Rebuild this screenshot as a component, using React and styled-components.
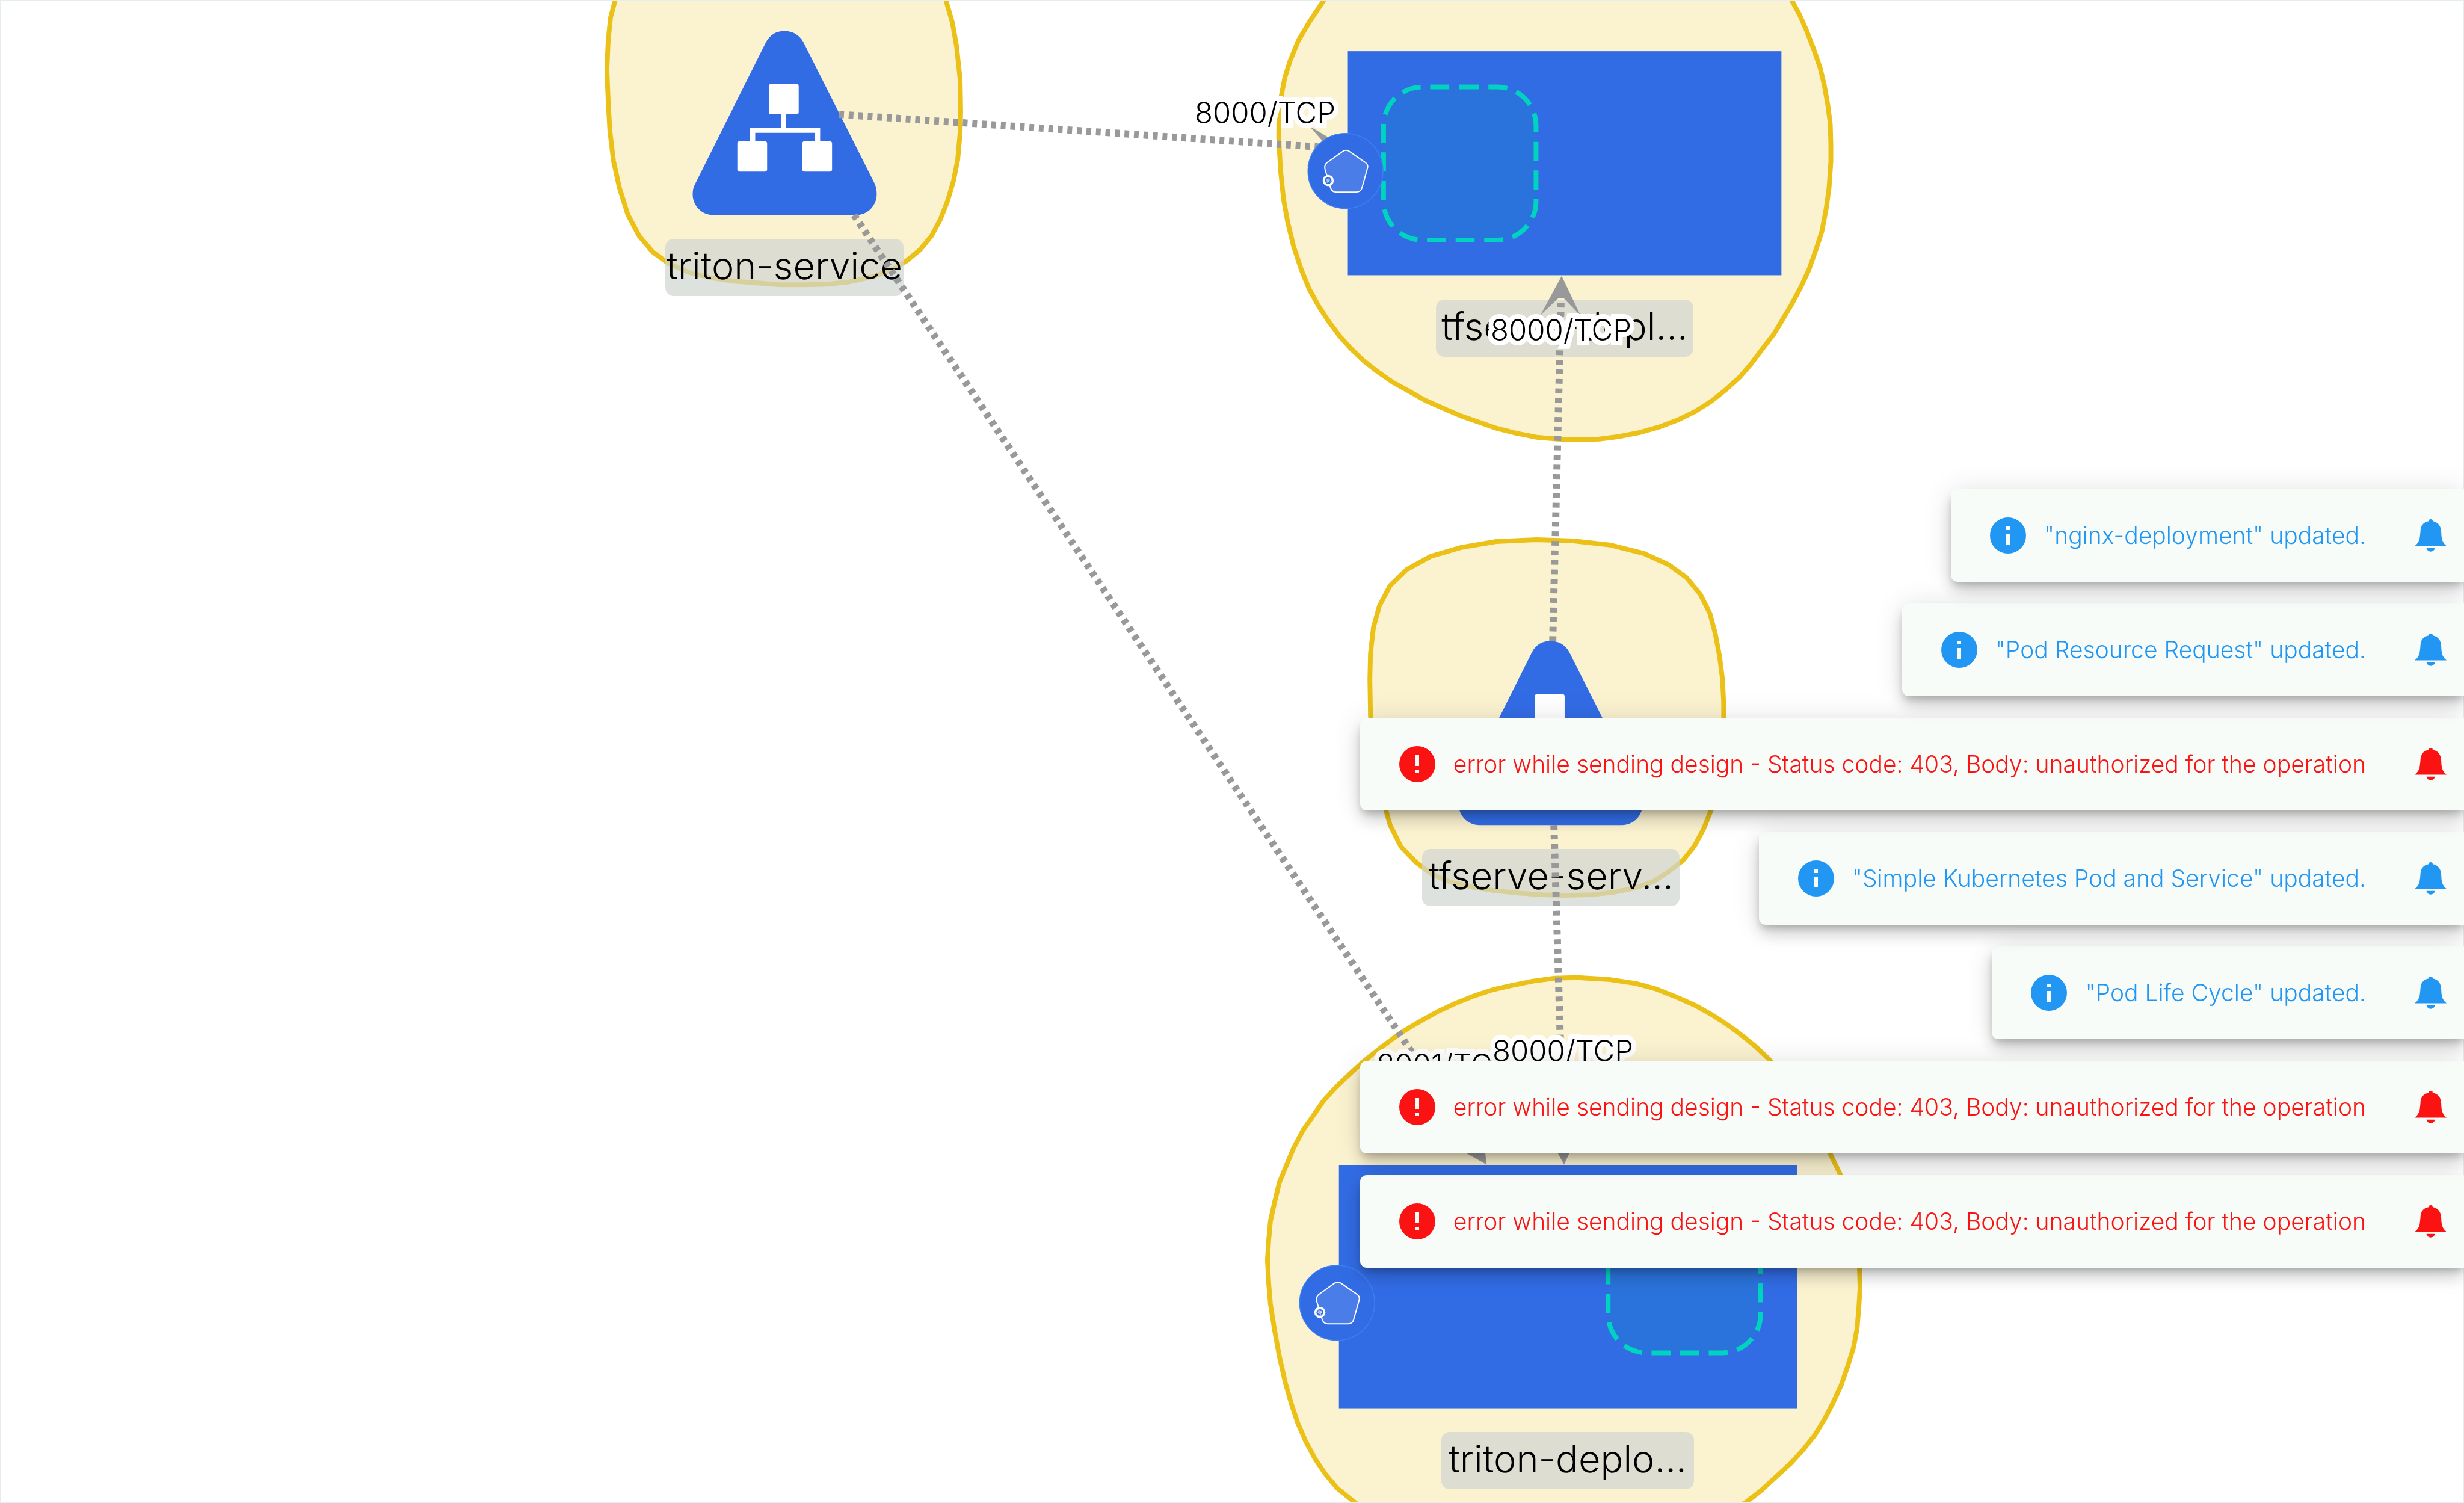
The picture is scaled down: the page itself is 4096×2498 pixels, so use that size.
import React from "react";
import styled, { createGlobalStyle } from "styled-components";

const WORLD = { w: 4137, h: 2523 };
const pct = (value, total) => `${(value / total) * 100}%`;

const GlobalStyle = createGlobalStyle`
  body {
    margin: 0;
    background: #ffffff;
    font-family: Inter, "Open Sans", sans-serif;
  }
`;

const Page = styled.main`
  position: relative;
  width: 100%;
  min-height: 100vh;
  overflow: hidden;
`;

const Canvas = styled.section`
  position: relative;
  width: 100%;
  aspect-ratio: ${WORLD.w} / ${WORLD.h};
  overflow: hidden;

  &::after {
    content: "";
    position: absolute;
    inset: 0;
    border: 1px solid #e6edf1;
    pointer-events: none;
  }
`;

const Layer = styled.svg`
  position: absolute;
  inset: 0;
  width: 100%;
  height: 100%;
`;

const NodeLabel = styled.span`
  position: absolute;
  left: ${(p) => pct(p.$x, WORLD.w)};
  top: ${(p) => pct(p.$y, WORLD.h)};
  transform: translateX(-50%);
  box-sizing: border-box;
  width: ${(p) => p.$w}px;
  height: 95px;
  padding-bottom: 7px;
  display: flex;
  align-items: center;
  justify-content: center;
  border-radius: 14px;
  background: rgba(208, 213, 209, 0.7);
  color: #000000;
  font-size: 63px;
  font-weight: 300;
  line-height: 88px;
  white-space: nowrap;
`;

const EdgeLabel = styled.span`
  position: absolute;
  left: ${(p) => pct(p.$x, WORLD.w)};
  top: ${(p) => pct(p.$y, WORLD.h)};
  transform: translate(-50%, -50%);
  color: #000000;
  font-size: 49px;
  font-weight: 300;
  line-height: 60px;
  white-space: nowrap;
  -webkit-text-stroke: 16px #ffffff;
  paint-order: stroke fill;
  stroke-linejoin: round;
`;

const ToastStack = styled.ul`
  position: fixed;
  right: 0;
  bottom: 391px;
  margin: 0;
  padding: 0;
  list-style: none;
  display: flex;
  flex-direction: column-reverse;
  align-items: flex-end;
  gap: 36px;
`;

const Toast = styled.li`
  position: relative;
  box-sizing: border-box;
  height: 154px;
  padding: 0 29px 0 65px;
  display: flex;
  align-items: center;
  border-radius: 11px 0 0 11px;
  background: #f7fcf8;
  color: ${(p) => (p.$kind === "error" ? "#fb1313" : "#2196f3")};
  box-shadow:
    0 8px 13px -3px rgba(0, 0, 0, 0.2),
    0 16px 27px rgba(0, 0, 0, 0.14),
    0 3px 48px rgba(0, 0, 0, 0.12);
`;

const StatusIcon = styled.svg`
  width: 60px;
  height: 60px;
  margin-right: 30px;
  flex: none;
`;

const Message = styled.span`
  font-size: 39px;
  font-weight: 300;
  line-height: 56px;
  white-space: nowrap;
`;

const BellButton = styled.button`
  margin: 0 0 0 81px;
  padding: 0;
  border: 0;
  background: none;
  color: inherit;
  display: flex;
  cursor: pointer;
`;

const Bell = styled.svg`
  width: 53px;
  height: 54px;
`;

const hulls = [
  "1036,-20 1033,0 1025,30 1021,70 1019,117 1021,167 1024,220 1030,270 1040,315 1054,360 1073,396 1096,423 1122,442 1156,457 1192,466 1232,472 1310,478 1350,478 1391,477 1426,473 1467,464 1498,452 1522,438 1545,419 1564,396 1579,368 1591,337 1601,303 1608,268 1612,223 1613,187 1612,133 1606,77 1599,38 1588,0 1582,-20",
  "2240,-20 2223,0 2199,36 2180,68 2166,102 2157,131 2151,162 2147,199 2147,233 2150,286 2155,334 2162,373 2172,414 2185,453 2198,485 2214,514 2229,537 2250,565 2268,585 2290,606 2313,624 2339,642 2368,658 2393,672 2429,688 2455,699 2484,709 2513,719 2545,727 2580,734 2616,737 2649,738 2685,737 2717,733 2753,726 2785,717 2817,705 2846,691 2874,673 2899,653 2921,633 2940,611 2958,587 2978,561 2992,538 3008,511 3024,481 3037,453 3049,419 3059,388 3066,351 3071,315 3074,271 3074,242 3073,208 3069,177 3063,143 3056,114 3045,82 3033,51 3021,24 3008,0 2996,-20",
  "2579,906 2642,908 2704,915 2760,929 2802,948 2832,970 2855,998 2871,1030 2880,1064 2887,1101 2892,1140 2894,1179 2894,1205 2892,1260 2886,1310 2875,1355 2860,1392 2845,1420 2826,1444 2802,1463 2776,1480 2744,1491 2709,1498 2671,1502 2628,1503 2590,1502 2546,1499 2508,1495 2472,1489 2436,1481 2405,1468 2377,1447 2352,1421 2334,1385 2326,1357 2312,1305 2305,1255 2301,1201 2300,1140 2301,1097 2306,1053 2316,1017 2334,983 2362,956 2402,934 2453,919 2512,909",
  "2648,1641 2610,1642 2574,1647 2539,1654 2508,1661 2477,1671 2444,1684 2414,1698 2380,1717 2350,1735 2319,1758 2289,1782 2266,1803 2243,1825 2222,1848 2204,1874 2188,1897 2172,1927 2160,1956 2148,1985 2140,2018 2133,2050 2130,2083 2128,2115 2130,2153 2133,2189 2140,2233 2148,2277 2158,2321 2168,2356 2179,2389 2192,2419 2208,2449 2225,2474 2245,2498 2276,2523 2306,2545 2880,2545 2930,2523 2957,2502 2983,2478 3007,2456 3028,2433 3047,2409 3063,2383 3077,2356 3091,2326 3102,2294 3112,2262 3118,2230 3121,2194 3123,2162 3122,2128 3117,2075 3106,2020 3090,1972 3073,1937 3045,1878 3010,1822 2970,1778 2948,1757 2927,1740 2903,1722 2877,1705 2847,1688 2813,1673 2780,1660 2747,1651 2700,1644",
];

const edges = [
  { from: [1409, 192], to: [2263, 250] },
  { from: [1434, 361], to: [2496, 1955] },
  { from: [2607, 1076], to: [2622, 463] },
  { from: [2609, 1385], to: [2626, 1955] },
];

const nodeLabels = [
  { text: "triton-service", x: 1317, y: 401, w: 396 },
  { text: "tfserve-depl...", x: 2627, y: 503, w: 428 },
  { text: "tfserve-serv...", x: 2604, y: 1425, w: 428 },
  { text: "triton-deplo...", x: 2632, y: 2404, w: 420 },
];

const edgeLabels = [
  { text: "8000/TCP", x: 2124, y: 190 },
  { text: "8000/TCP", x: 2621, y: 554 },
  { text: "8001/TCP", x: 2424, y: 1788 },
  { text: "8000/TCP", x: 2624, y: 1765 },
];

const forbidden =
  "error while sending design - Status code: 403, Body: unauthorized for the operation";

const toasts = [
  { kind: "info", text: '"nginx-deployment" updated.' },
  { kind: "info", text: '"Pod Resource Request" updated.' },
  { kind: "error", text: forbidden },
  { kind: "info", text: '"Simple Kubernetes Pod and Service" updated.' },
  { kind: "info", text: '"Pod Life Cycle" updated.' },
  { kind: "error", text: forbidden },
  { kind: "error", text: forbidden },
];

function ServiceNode({ x, y }) {
  return (
    <g transform={`translate(${x} ${y})`}>
      <path
        fill="#326ce5"
        d="M123 19C130 6 141 0 154 0S179 6 186 19L306 257C308 262 309 268 309 274C309 293 294 309 274 309H35C15 309 0 293 0 274C0 268 1 262 4 257Z"
      />
      <g fill="#ffffff">
        <rect x="128" y="89" width="50" height="51" rx="4" />
        <rect x="75" y="185" width="50" height="51" rx="4" />
        <rect x="184" y="185" width="50" height="51" rx="4" />
        <path d="M148 138h9v24h57v25h-9v-16h-100v16h-9v-25h52z" />
      </g>
    </g>
  );
}

function PodArea({ x, y }) {
  return (
    <path
      transform={`translate(${x} ${y})`}
      d="M128 0H191A65 65 0 0 1 256 65V192A65 65 0 0 1 191 257H65A65 65 0 0 1 0 192V65A65 65 0 0 1 65 0Z"
      fill="#2b73dc"
      stroke="#00d3bf"
      strokeWidth="8"
      strokeDasharray="32 16"
    />
  );
}

function DeploymentBadge({ x, y }) {
  const spokes = [0, 1, 2, 3, 4, 5, 6].map((i) => (i * 360) / 7);
  return (
    <g transform={`translate(${x} ${y})`}>
      <circle r="63" fill="#326ce5" stroke="#3b80f7" strokeWidth="1.5" />
      <g transform="scale(0.3333) translate(-208 -212)">
        <path
          d="M195 113Q211 103 227 113L308 169Q324 180 319 198L291 298Q284 318 264 318H160Q143 318 134 300L105 204Q100 183 115 170Z"
          fill="#ffffff"
          fillOpacity="0.12"
          stroke="#ffffff"
          strokeWidth="6"
          strokeLinejoin="round"
        />
        <circle cx="121" cy="260" r="28" fill="#ffffff" />
        <g transform="translate(121 260)">
          <path d="M0-18L14-11L18 4L8 16H-8L-18 4L-14-11Z" fill="#326ce5" />
          <circle r="7" fill="none" stroke="#ffffff" strokeWidth="2" />
          {spokes.map((a) => (
            <path key={a} d="M0-2V-13" transform={`rotate(${a})`} stroke="#ffffff" strokeWidth="2" />
          ))}
        </g>
      </g>
    </g>
  );
}

function Edge({ from, to }) {
  const dx = to[0] - from[0];
  const dy = to[1] - from[1];
  const len = Math.hypot(dx, dy);
  const angle = (Math.atan2(dy, dx) * 180) / Math.PI;
  return (
    <g transform={`translate(${from[0]} ${from[1]}) rotate(${angle})`}>
      <path d={`M0 0H${len - 37}`} stroke="#999999" strokeWidth="12" strokeDasharray="8 8" />
      <path d={`M${len} 0L${len - 67} -34L${len - 37} -4V4L${len - 67} 34Z`} fill="#999999" />
    </g>
  );
}

function Notice({ kind, text }) {
  return (
    <Toast $kind={kind} role="status">
      <StatusIcon viewBox="0 0 20 20" aria-hidden="true">
        <circle cx="10" cy="10" r="10" fill="currentColor" />
        <path
          fill="#f7fcf8"
          d={kind === "error" ? "M9 5h2v6H9zM9 13h2v2H9z" : "M9 5h2v2H9zM9 9h2v6H9z"}
        />
      </StatusIcon>
      <Message>{text}</Message>
      <BellButton type="button" aria-label="Dismiss notification">
        <Bell viewBox="111 33 161 162" aria-hidden="true" fill="currentColor">
          <path d="M111 167Q136 150 138 115L140 95C140 66 155 46 182 42A10 10 0 0 1 202 42C228 46 244 66 245 95L246 115Q248 150 272 167Z" />
          <path d="M170 177H214Q208 195 192 195T170 177Z" />
        </Bell>
      </BellButton>
    </Toast>
  );
}

export default function App() {
  const viewBox = `0 0 ${WORLD.w} ${WORLD.h}`;
  return (
    <>
      <GlobalStyle />
      <Page>
        <Canvas>
          <Layer viewBox={viewBox} aria-hidden="true">
            {hulls.map((points, i) => (
              <polygon key={i} points={points} fill="#fbf2d0" stroke="#ebc118" strokeWidth="8" />
            ))}
            <ServiceNode x={1163} y={52} />
            <ServiceNode x={2449} y={1076} />
            <rect x="2263" y="86" width="728" height="376" fill="#326ce5" />
            <rect x="2248" y="1956" width="769" height="408" fill="#326ce5" />
            <PodArea x={2323} y={146} />
            <PodArea x={2700} y={2014} />
          </Layer>
          {nodeLabels.map((n) => (
            <NodeLabel key={n.text} $x={n.x} $y={n.y} $w={n.w}>
              {n.text}
            </NodeLabel>
          ))}
          <Layer viewBox={viewBox} aria-hidden="true">
            {edges.map((e, i) => (
              <Edge key={i} {...e} />
            ))}
            <DeploymentBadge x={2259} y={287} />
            <DeploymentBadge x={2245} y={2187} />
          </Layer>
          {edgeLabels.map((e, i) => (
            <EdgeLabel key={i} $x={e.x} $y={e.y}>
              {e.text}
            </EdgeLabel>
          ))}
        </Canvas>
        <ToastStack>
          {[...toasts].reverse().map((t, i) => (
            <Notice key={i} {...t} />
          ))}
        </ToastStack>
      </Page>
    </>
  );
}
